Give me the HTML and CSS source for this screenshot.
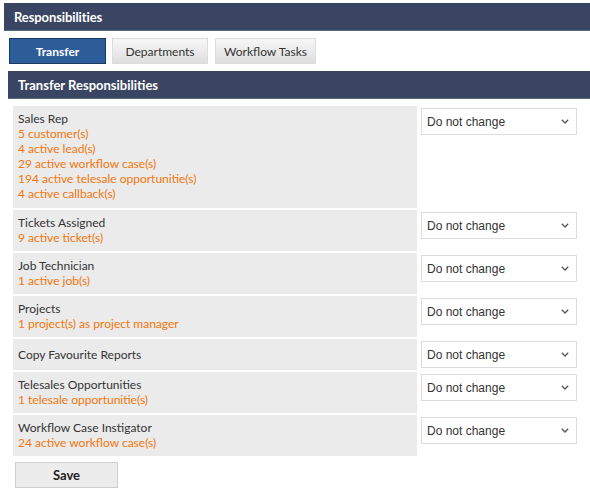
FILE: index.html
```html
<!DOCTYPE html>
<html>
<head>
<meta charset="utf-8">
<link rel="stylesheet" href="styles.css">
</head>
<body>
<div class="page">
  <div class="bar bar-main">Responsibilities</div>
  <div class="tabs">
    <div class="tab tab-active">Transfer</div>
    <div class="tab tab-dept">Departments</div>
    <div class="tab tab-wf">Workflow Tasks</div>
  </div>
  <div class="bar bar-sub">Transfer Responsibilities</div>
  <div class="rows">
    <div class="row row-first">
      <div class="label">
        <div class="title">Sales Rep</div>
        <div class="info">5 customer(s)</div>
        <div class="info">4 active lead(s)</div>
        <div class="info">29 active workflow case(s)</div>
        <div class="info">194 active telesale opportunitie(s)</div>
        <div class="info">4 active callback(s)</div>
      </div>
      <div class="choice"><div class="select"><span>Do not change</span><svg width="8" height="5" viewBox="0 0 8 5"><path d="M0.8 0.8l3.2 3.2L7.2 0.8" fill="none" stroke="#555" stroke-width="1.3"/></svg></div></div>
    </div>
    <div class="row">
      <div class="label">
        <div class="title">Tickets Assigned</div>
        <div class="info">9 active ticket(s)</div>
      </div>
      <div class="choice"><div class="select"><span>Do not change</span><svg width="8" height="5" viewBox="0 0 8 5"><path d="M0.8 0.8l3.2 3.2L7.2 0.8" fill="none" stroke="#555" stroke-width="1.3"/></svg></div></div>
    </div>
    <div class="row">
      <div class="label">
        <div class="title">Job Technician</div>
        <div class="info">1 active job(s)</div>
      </div>
      <div class="choice"><div class="select"><span>Do not change</span><svg width="8" height="5" viewBox="0 0 8 5"><path d="M0.8 0.8l3.2 3.2L7.2 0.8" fill="none" stroke="#555" stroke-width="1.3"/></svg></div></div>
    </div>
    <div class="row">
      <div class="label">
        <div class="title">Projects</div>
        <div class="info">1 project(s) as project manager</div>
      </div>
      <div class="choice"><div class="select"><span>Do not change</span><svg width="8" height="5" viewBox="0 0 8 5"><path d="M0.8 0.8l3.2 3.2L7.2 0.8" fill="none" stroke="#555" stroke-width="1.3"/></svg></div></div>
    </div>
    <div class="row">
      <div class="label">
        <div class="title">Copy Favourite Reports</div>
      </div>
      <div class="choice"><div class="select"><span>Do not change</span><svg width="8" height="5" viewBox="0 0 8 5"><path d="M0.8 0.8l3.2 3.2L7.2 0.8" fill="none" stroke="#555" stroke-width="1.3"/></svg></div></div>
    </div>
    <div class="row">
      <div class="label">
        <div class="title">Telesales Opportunities</div>
        <div class="info">1 telesale opportunitie(s)</div>
      </div>
      <div class="choice"><div class="select"><span>Do not change</span><svg width="8" height="5" viewBox="0 0 8 5"><path d="M0.8 0.8l3.2 3.2L7.2 0.8" fill="none" stroke="#555" stroke-width="1.3"/></svg></div></div>
    </div>
    <div class="row">
      <div class="label">
        <div class="title">Workflow Case Instigator</div>
        <div class="info">24 active workflow case(s)</div>
      </div>
      <div class="choice"><div class="select"><span>Do not change</span><svg width="8" height="5" viewBox="0 0 8 5"><path d="M0.8 0.8l3.2 3.2L7.2 0.8" fill="none" stroke="#555" stroke-width="1.3"/></svg></div></div>
    </div>
  </div>
  <div class="actions"><div class="save">Save</div></div>
</div>
</body>
</html>
```
FILE: styles.css
```css
* { box-sizing: border-box; }
html, body { margin: 0; padding: 0; background: #fff; }
body { font-family: Lato, "Liberation Sans", Arial, sans-serif; font-size: 12px; color: #333; }
.page { padding-top: 3px; }
.bar {
  background: #3a4563;
  color: #fff;
  font-weight: bold;
  border-bottom: 1px solid #50707c;
  display: flex;
  align-items: center;
}
.bar-main { margin-left: 4px; height: 28px; padding-left: 10px; font-size: 13px; letter-spacing: -0.1px; }
.bar-sub { margin-left: 8px; height: 28px; padding-left: 10px; font-size: 13px; margin-top: 7px; }
.tabs { display: flex; margin-top: 7px; margin-left: 9px; }
.tab {
  height: 26px;
  display: flex;
  align-items: center;
  justify-content: center;
  font-size: 12px;
  color: #333;
  border: 1px solid #dcdcdc;
  background: linear-gradient(#f7f7f7, #dedede);
}
.tab-active { width: 97px; background: #2c5d99; border-color: #173a66; color: #fff; font-weight: bold; }
.tab-dept { width: 96px; margin-left: 6px; }
.tab-wf { width: 101px; margin-left: 7px; }
.rows { margin-top: 7px; margin-left: 13px; display: flex; flex-direction: column; gap: 2px; }
.row { display: flex; }
.label {
  width: 404px;
  background: #ebebeb;
  padding: 5px 5px 6px 5px;
  line-height: 15px;
  display: flex;
  flex-direction: column;
  justify-content: center;
}
.row-first .label { padding-bottom: 7px; }
.title { color: #333; }
.info { color: #f2760c; }
.choice { padding: 2px 0 2px 4px; }
.select {
  width: 156px;
  height: 27px;
  border: 1px solid #dcdcdc;
  background: #fff;
  display: flex;
  align-items: center;
  justify-content: space-between;
  padding: 0 7px 0 5px;
  font-family: "Liberation Sans", Arial, sans-serif;
  font-size: 12px;
  color: #333;
}
.select svg { display: block; }
.actions { margin-top: 6px; margin-left: 15px; }
.save {
  width: 103px;
  height: 26px;
  border: 1px solid #cfcfcf;
  background: #ececec;
  display: flex;
  align-items: center;
  justify-content: center;
  font-weight: bold;
  font-size: 13px;
  color: #222;
}
```
